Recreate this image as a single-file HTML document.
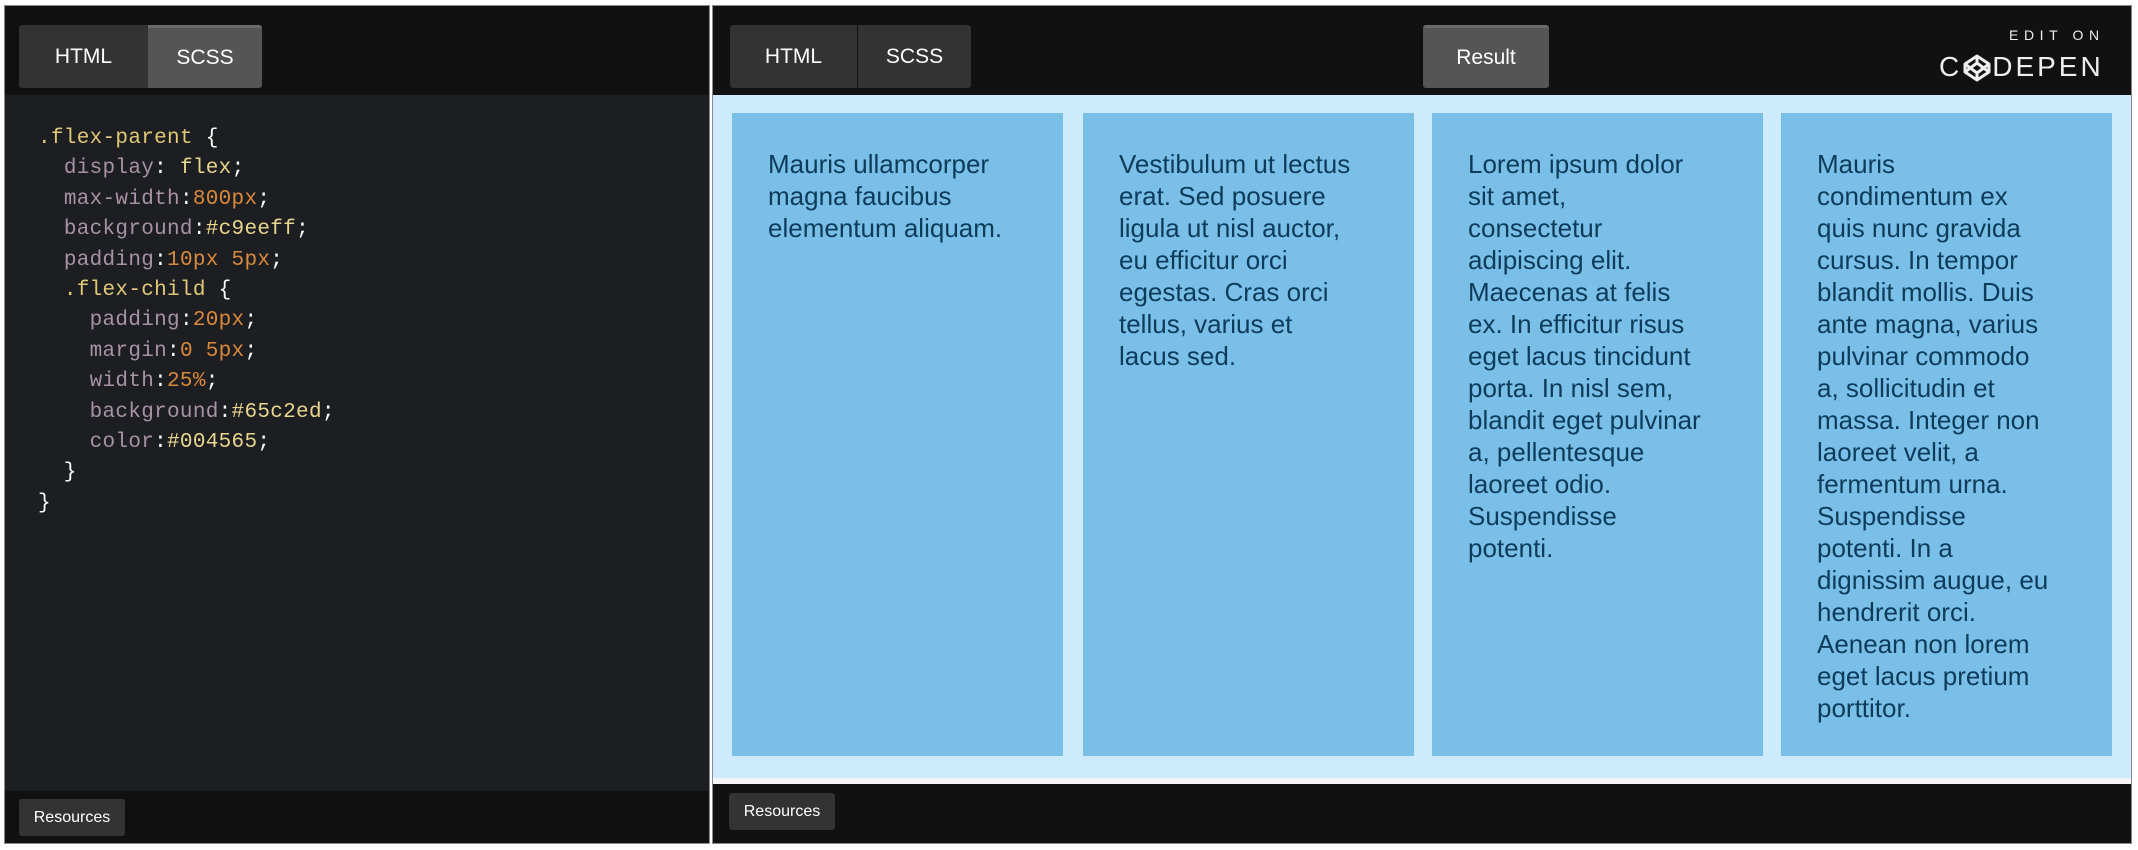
<!DOCTYPE html>
<html><head><meta charset="utf-8"><style>
*{box-sizing:border-box;margin:0;padding:0}
body{width:2138px;height:850px;background:#fff;position:relative;overflow:hidden;font-family:"Liberation Sans",sans-serif}
.abs{position:absolute}
.panel{position:absolute;top:5px;height:839px;border:1px solid #8a8a8a;background:#111}
.tab{position:absolute;top:19px;height:63px;color:#fff;font-size:21px;display:flex;align-items:center;justify-content:center;background:#333;border-radius:3px}
.code{position:absolute;left:33px;top:118px;font-family:"Liberation Mono",monospace;font-size:21px;line-height:30.4px;white-space:pre;color:#fff;letter-spacing:.3px}
.s{color:#e1c877}.p{color:#a692a4}.n{color:#d9893c}.h{color:#e8d68e}
.res{position:absolute;height:37px;width:106px;background:#333;border-radius:3px;color:#fff;font-size:16px;display:flex;align-items:center;justify-content:center}
.child{position:absolute;top:107px;height:643px;width:331px;background:#7abfe8;color:#0d3c5a;font-size:26px;line-height:32px;padding:35px 0 0 36px;white-space:nowrap}
</style></head><body>
<div class="panel" style="left:4px;width:706px">
  <div class="tab" style="left:14px;width:129px;border-radius:3px 0 0 3px">HTML</div>
  <div class="tab" style="left:143px;width:114px;background:#555;border-top:3px solid #6a6a6a;border-radius:0 3px 3px 0">SCSS</div>
  <div class="abs" style="left:0;top:89px;width:704px;height:696px;background:#1d1e22"></div>
  <div class="code"><span class="s">.flex-parent</span> {
  <span class="p">display</span>: <span class="h">flex</span>;
  <span class="p">max-width</span>:<span class="n">800px</span>;
  <span class="p">background</span>:<span class="h">#c9eeff</span>;
  <span class="p">padding</span>:<span class="n">10px 5px</span>;
  <span class="s">.flex-child</span> {
    <span class="p">padding</span>:<span class="n">20px</span>;
    <span class="p">margin</span>:<span class="n">0 5px</span>;
    <span class="p">width</span>:<span class="n">25%</span>;
    <span class="p">background</span>:<span class="h">#65c2ed</span>;
    <span class="p">color</span>:<span class="h">#004565</span>;
  }
}</div>
  <div class="res" style="left:14px;top:793px">Resources</div>
</div>
<div class="panel" style="left:712px;width:1420px">
  <div class="tab" style="left:17px;width:127px;border-radius:3px 0 0 3px">HTML</div>
  <div class="tab" style="left:145px;width:113px;border-radius:0 3px 3px 0">SCSS</div>
  <div class="tab" style="left:710px;width:126px;background:#555;border-top:3px solid #6a6a6a">Result</div>
  <div class="abs" style="left:1296px;top:21px;color:#eee;font-size:14px;letter-spacing:5.6px">EDIT ON</div>
  <div class="abs" style="left:1226px;top:45px;color:#eee;font-size:28px;letter-spacing:3px">C<span style="display:inline-block;width:30px"></span>DEPEN</div>
  <svg class="abs" style="left:1250px;top:48px" width="28" height="28" viewBox="0 0 28 28"><g fill="none" stroke="#eee" stroke-width="3" stroke-linejoin="round"><path d="M14 2L26 10V18L14 26L2 18V10Z"/><path d="M14 2V9M14 19V26M2 10L14 19L26 10M2 18L14 9L26 18"/></g></svg>
  <div class="abs" style="left:0;top:89px;width:1418px;height:683px;background:#cdebfc"></div>
  <div class="abs" style="left:0;top:772px;width:1418px;height:6px;background:#f4f4f4"></div>
  <div class="child" style="left:19px">Mauris ullamcorper<br>magna faucibus<br>elementum aliquam.</div>
  <div class="child" style="left:370px">Vestibulum ut lectus<br>erat. Sed posuere<br>ligula ut nisl auctor,<br>eu efficitur orci<br>egestas. Cras orci<br>tellus, varius et<br>lacus sed.</div>
  <div class="child" style="left:719px">Lorem ipsum dolor<br>sit amet,<br>consectetur<br>adipiscing elit.<br>Maecenas at felis<br>ex. In efficitur risus<br>eget lacus tincidunt<br>porta. In nisl sem,<br>blandit eget pulvinar<br>a, pellentesque<br>laoreet odio.<br>Suspendisse<br>potenti.</div>
  <div class="child" style="left:1068px">Mauris<br>condimentum ex<br>quis nunc gravida<br>cursus. In tempor<br>blandit mollis. Duis<br>ante magna, varius<br>pulvinar commodo<br>a, sollicitudin et<br>massa. Integer non<br>laoreet velit, a<br>fermentum urna.<br>Suspendisse<br>potenti. In a<br>dignissim augue, eu<br>hendrerit orci.<br>Aenean non lorem<br>eget lacus pretium<br>porttitor.</div>
  <div class="res" style="left:16px;top:787px">Resources</div>
</div>
</body></html>
